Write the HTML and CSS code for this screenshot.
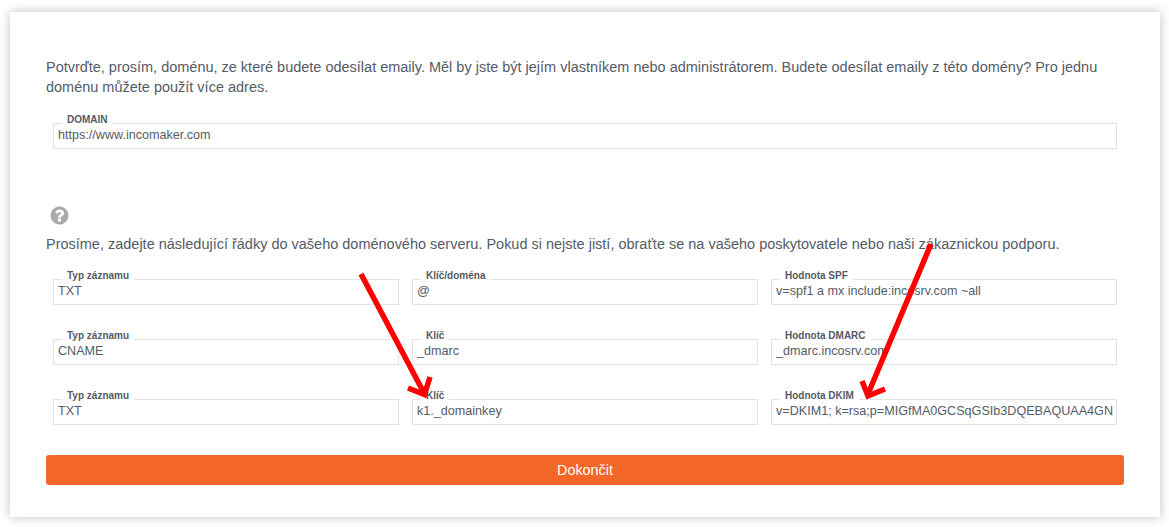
FILE: index.html
```html
<!DOCTYPE html>
<html lang="cs">
<head>
<meta charset="utf-8">
<title>Doména</title>
<link rel="stylesheet" href="styles.css">
</head>
<body>
<main class="card">
  <p class="text">Potvrďte, prosím, doménu, ze které budete odesílat emaily. Měl by jste být jejím vlastníkem nebo administrátorem. Budete odesílat emaily z této domény? Pro jednu doménu můžete použít více adres.</p>
  <div class="domain">
    <fieldset class="field"><legend class="legend">DOMAIN</legend><input class="input" readonly value="https://www.incomaker.com"></fieldset>
  </div>
  <svg class="help" viewBox="0 0 1792 1792" aria-hidden="true"><path fill="#aaaaaa" d="M1024 1376v-192q0-14-9-23t-23-9h-192q-14 0-23 9t-9 23v192q0 14 9 23t23 9h192q14 0 23-9t9-23zm256-672q0-88-55.500-163t-138.500-116-170-41q-243 0-371 213-15 24 8 42l132 100q7 6 19 6 16 0 25-12 53-68 86-92 34-24 86-24 48 0 85.500 26t37.500 59q0 38-20 61t-68 45q-63 28-115.500 86.500t-52.500 125.500v36q0 14 9 23t23 9h192q14 0 23-9t9-23q0-19 21.500-49.500t54.500-49.500q32-18 49-28.500t46-35 44.500-48 28-60.500 12.500-81zm384 192q0 209-103 385.500t-279.500 279.500-385.500 103-385.500-103-279.500-279.500-103-385.500 103-385.500 279.500-279.500 385.500-103 385.500 103 279.500 279.500 103 385.500z"/></svg>
  <p class="text">Prosíme, zadejte následující řádky do vašeho doménového serveru. Pokud si nejste jistí, obraťte se na vašeho poskytovatele nebo naši zákaznickou podporu.</p>
  <div class="grid">
    <fieldset class="field"><legend class="legend">Typ záznamu</legend><input class="input" readonly value="TXT"></fieldset>
    <fieldset class="field"><legend class="legend">Klíč/doména</legend><input class="input" readonly value="@"></fieldset>
    <fieldset class="field"><legend class="legend">Hodnota SPF</legend><input class="input" readonly value="v=spf1 a mx include:incosrv.com ~all"></fieldset>
    <fieldset class="field"><legend class="legend">Typ záznamu</legend><input class="input" readonly value="CNAME"></fieldset>
    <fieldset class="field"><legend class="legend">Klíč</legend><input class="input" readonly value="_dmarc"></fieldset>
    <fieldset class="field"><legend class="legend">Hodnota DMARC</legend><input class="input" readonly value="_dmarc.incosrv.com"></fieldset>
    <fieldset class="field"><legend class="legend">Typ záznamu</legend><input class="input" readonly value="TXT"></fieldset>
    <fieldset class="field"><legend class="legend">Klíč</legend><input class="input" readonly value="k1._domainkey"></fieldset>
    <fieldset class="field"><legend class="legend">Hodnota DKIM</legend><input class="input" readonly value="v=DKIM1; k=rsa;p=MIGfMA0GCSqGSIb3DQEBAQUAA4GNADCBiQKBgQC"></fieldset>
  </div>
  <button class="submit" type="button">Dokončit</button>
</main>
<svg class="arrows" width="1169" height="527" aria-hidden="true">
  <g class="arrow">
    <path d="M361 274L424 393"/>
    <path d="M408 388L424.500 394.500L430 377"/>
    <path d="M931 244L868 394"/>
    <path d="M862 381L868 396L885 389"/>
  </g>
</svg>
</body>
</html>
```
FILE: styles.css
```css
html, body {
  margin: 0;
  padding: 0;
  background: #ffffff;
}
body {
  height: 527px;
  overflow: hidden;
  font-family: "Liberation Sans", Arial, sans-serif;
  color: #555b66;
}
.card {
  box-sizing: border-box;
  width: 1150px;
  height: 505px;
  margin: 12px 0 0 10px;
  padding: 45px 36px 0;
  background: #ffffff;
  box-shadow: 0 0 10px rgba(0, 0, 0, 0.25);
}
.text {
  margin: 0;
  font-size: 14.49px;
  line-height: 20px;
  color: #555b66;
}
.domain {
  margin: 17px 7px 0;
}
.help {
  display: block;
  width: 21px;
  height: 21px;
  margin: 56px 0 8px 3px;
}
.grid {
  display: grid;
  grid-template-columns: repeat(3, 346px);
  column-gap: 13px;
  row-gap: 25px;
  margin: 16px 7px 0;
}
.field {
  box-sizing: border-box;
  height: 35px;
  min-width: 0;
  margin: 0;
  padding: 0;
  border: 1px solid #e3e3e3;
}
.legend {
  margin-left: 8px;
  padding: 0 5px 6px;
  font-size: 10px;
  font-weight: bold;
  line-height: 12px;
  color: #555b66;
}
.input {
  display: block;
  box-sizing: border-box;
  width: 100%;
  height: 22px;
  margin: -8px 0 0;
  padding: 0 3px 0 4px;
  border: 0;
  outline: 0;
  background: transparent;
  font: 12.6px/20px "Liberation Sans", Arial, sans-serif;
  color: #555b66;
}
.submit {
  display: block;
  width: 1078px;
  height: 30px;
  margin: 30px 0 0;
  padding: 0;
  border: 0;
  border-radius: 3px;
  background: #f26627;
  color: #ffffff;
  font: 14.4px "Liberation Sans", Arial, sans-serif;
}
.arrows {
  position: absolute;
  left: 0;
  top: 0;
  pointer-events: none;
}
.arrow path {
  fill: none;
  stroke: #ff0000;
  stroke-width: 5.5;
  stroke-linecap: butt;
  stroke-linejoin: miter;
}
```
